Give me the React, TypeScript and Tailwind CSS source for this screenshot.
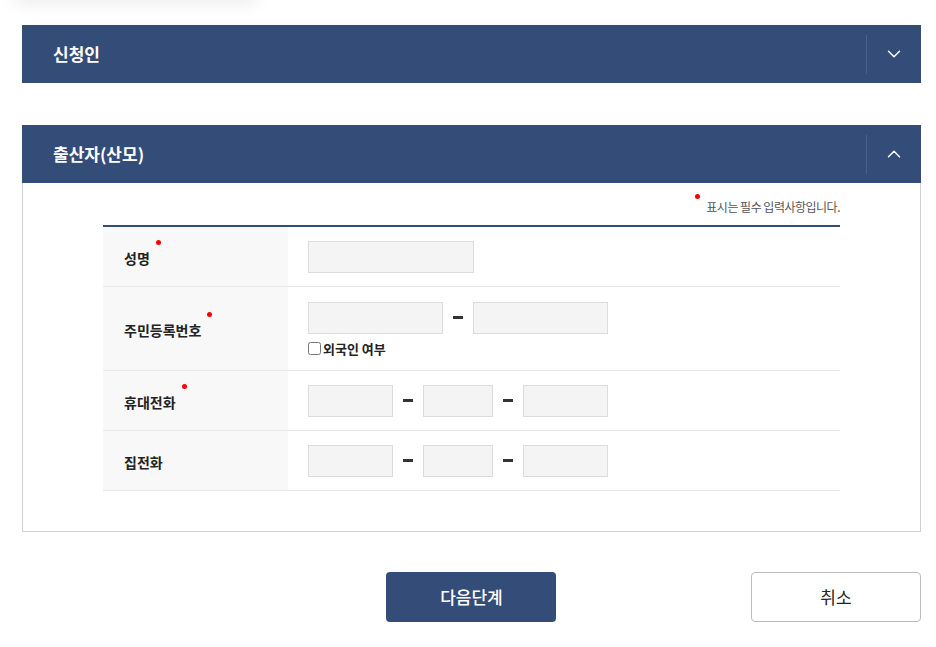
import { ChevronDown, ChevronUp } from "lucide-react";

const font = { fontFamily: '"Noto Sans CJK KR", "Noto Sans", sans-serif' };

function Req() {
  return <span className="absolute -right-[11px] -top-[8px] w-[5px] h-[5px] rounded-full bg-[#f00]" />;
}

function Box({ w }: { w: string }) {
  return <input type="text" className={`${w} h-[32px] bg-[#f4f4f4] border border-[#dcdcdc] outline-none`} />;
}

function Dash() {
  return (
    <span className="w-[30px] flex justify-center">
      <span className="w-[10px] h-[3px] bg-[#333]" />
    </span>
  );
}

function Row({ label, req, children, tall }: { label: string; req?: boolean; children: React.ReactNode; tall?: boolean }) {
  return (
    <div className={`flex border-b border-[#e8e8e8] ${tall ? "h-[84px]" : "h-[60px]"}`}>
      <div className="w-[185px] bg-[#f8f8f8] flex items-center pl-[21px]">
        <span className="relative text-[14px] font-bold text-[#222] mt-[4px]">
          {label}
          {req && <Req />}
        </span>
      </div>
      <div className="flex-1 flex flex-col justify-center pl-[20px]">{children}</div>
    </div>
  );
}

export default function App() {
  return (
    <div className="min-h-screen bg-white" style={font}>
      <div className="w-[250px] h-[14px] -mt-[14px] ml-[10px] rounded-b-[40px] shadow-[0_4px_16px_rgba(0,0,0,0.08)]" />
      <div className="ml-[22px] pt-[25px] w-[899px]">
        {/* 신청인 */}
        <div className="h-[58px] bg-[#344d78] flex items-center">
          <h2 className="flex-1 pl-[31px] text-white text-[17px] font-bold">신청인</h2>
          <div className="w-px h-[39px] bg-[#4c6390]" />
          <div className="w-[54px] flex justify-center">
            <ChevronDown className="w-[22px] h-[22px] text-white" strokeWidth={1.6} />
          </div>
        </div>

        {/* 출산자(산모) */}
        <div className="mt-[42px] h-[58px] bg-[#344d78] flex items-center">
          <h2 className="flex-1 pl-[31px] text-white text-[17px] font-bold">출산자(산모)</h2>
          <div className="w-px h-[39px] bg-[#4c6390]" />
          <div className="w-[54px] flex justify-center">
            <ChevronUp className="w-[22px] h-[22px] text-white" strokeWidth={1.6} />
          </div>
        </div>
        <div className="border border-t-0 border-[#d0d0d0] pl-[80px] pr-[80px] pt-[15px] pb-[40px]">
          <p className="text-right text-[12px] text-[#555] tracking-[-0.5px] mb-[9px]">
            <span className="relative">
              <span className="absolute -left-[11px] -top-[4px] w-[5px] h-[5px] rounded-full bg-[#f00]" />
            </span>
            표시는 필수 입력사항입니다.
          </p>
          <div className="border-t-2 border-[#344d78]">
            <Row label="성명" req>
              <Box w="w-[166px]" />
            </Row>
            <Row label="주민등록번호" req tall>
              <div className="flex items-center mt-[3px]">
                <Box w="w-[135px]" />
                <Dash />
                <Box w="w-[135px]" />
              </div>
              <label className="flex items-center gap-[2px] mt-[5px] text-[13px] font-bold text-[#222]">
                <input type="checkbox" className="w-[13px] h-[13px]" />
                외국인 여부
              </label>
            </Row>
            <Row label="휴대전화" req>
              <div className="flex items-center">
                <Box w="w-[85px]" />
                <Dash />
                <Box w="w-[70px]" />
                <Dash />
                <Box w="w-[85px]" />
              </div>
            </Row>
            <Row label="집전화">
              <div className="flex items-center">
                <Box w="w-[85px]" />
                <Dash />
                <Box w="w-[70px]" />
                <Dash />
                <Box w="w-[85px]" />
              </div>
            </Row>
          </div>
        </div>

        {/* Buttons */}
        <div className="grid grid-cols-3 mt-[40px]">
          <div />
          <div className="flex justify-center">
            <button className="w-[170px] h-[50px] rounded-[4px] bg-[#344d78] text-white text-[17px] font-medium">다음단계</button>
          </div>
          <div className="flex justify-end">
            <button className="w-[170px] h-[50px] rounded-[4px] bg-white border border-[#bbb] text-[#222] text-[17px]">취소</button>
          </div>
        </div>
      </div>
    </div>
  );
}
